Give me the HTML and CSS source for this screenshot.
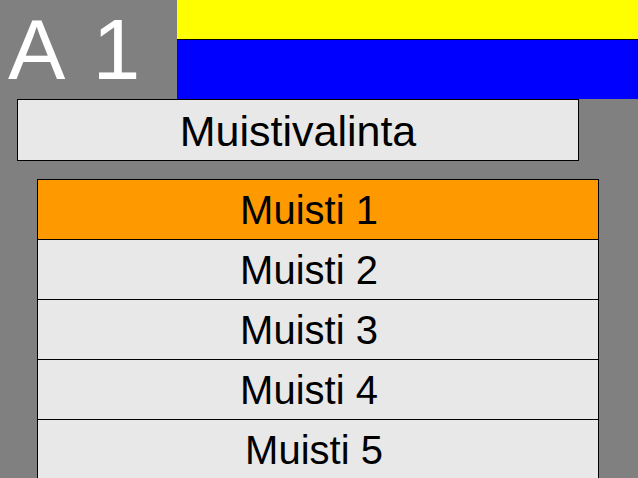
FILE: index.html
```html
<!DOCTYPE html>
<html>
<head>
<meta charset="utf-8">
<link rel="stylesheet" href="styles.css">
</head>
<body>
<div class="screen">
  <div class="top">
    <div class="station">A 1</div>
    <div class="flags">
      <div class="flag-yellow"></div>
      <div class="flag-blue"></div>
    </div>
  </div>
  <div class="title">Muistivalinta</div>
  <div class="list">
    <div class="item active">Muisti 1</div>
    <div class="item">Muisti 2</div>
    <div class="item">Muisti 3</div>
    <div class="item">Muisti 4</div>
    <div class="item last">Muisti 5</div>
  </div>
</div>
</body>
</html>
```
FILE: styles.css
```css
html, body {
  margin: 0;
  padding: 0;
  background: #808080;
  overflow: hidden;
}
.screen {
  width: 638px;
  height: 478px;
  font-family: "Liberation Sans", Arial, sans-serif;
  display: flex;
  flex-direction: column;
}
.top {
  display: flex;
  height: 99px;
  flex-shrink: 0;
}
.station {
  width: 177px;
  color: #ffffff;
  font-size: 86px;
  line-height: 98px;
  padding-left: 8px;
  word-spacing: 8px;
  box-sizing: border-box;
}
.flags {
  flex: 1;
  display: flex;
  flex-direction: column;
}
.flag-yellow {
  height: 39px;
  background: #ffff00;
  border-bottom: 1px solid #000;
}
.flag-blue {
  flex: 1;
  background: #0000ff;
}
.title {
  flex-shrink: 0;
  margin-left: 17px;
  width: 562px;
  height: 62px;
  box-sizing: border-box;
  background: #e8e8e8;
  border: 1px solid #000;
  font-size: 43px;
  display: flex;
  align-items: center;
  justify-content: center;
  padding-top: 2px;
  color: #000;
}
.list {
  flex-shrink: 0;
  margin-top: 18px;
  margin-left: 37px;
  width: 562px;
  box-sizing: border-box;
  border: 1px solid #000;
  border-bottom: none;
}
.item {
  height: 60px;
  box-sizing: border-box;
  border-bottom: 1px solid #000;
  background: #e8e8e8;
  font-size: 40px;
  display: flex;
  align-items: center;
  justify-content: center;
  padding-right: 18px;
  padding-top: 2px;
  color: #000;
}
.item.active {
  background: #ff9900;
}
.item.last {
  padding-right: 8px;
}
```
